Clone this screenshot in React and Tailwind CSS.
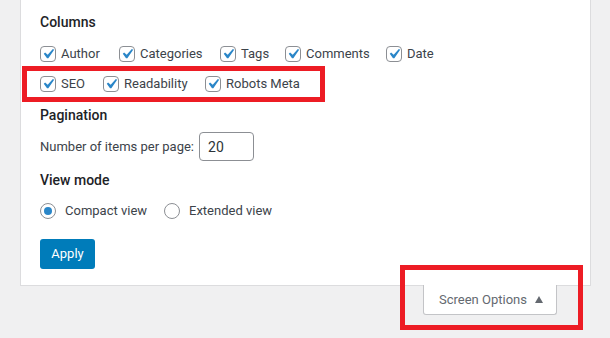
import React from 'react'

const font = "font-['Segoe_UI',Roboto,'Liberation_Sans',sans-serif]"

const CheckBox = ({ label, width }) => (
  <label className={`flex items-center gap-[5px] shrink-0 ${width}`}>
    <span className="flex items-center justify-center w-4 h-4 rounded-[4px] border border-[#8c8f94] bg-white">
      <svg viewBox="0 0 20 20" className="w-[20px] h-[20px] shrink-0 -m-[3px]">
        <path d="M14.83 4.89l1.34.94-5.81 8.38H9.02L5.78 9.67l1.34-1.25 2.57 2.4z" fill="#2a86c8" />
      </svg>
    </span>
    <span className="text-[13px] text-[#3c434a]">{label}</span>
  </label>
)

const Radio = ({ label, checked, width }) => (
  <label className={`flex items-center gap-[9px] shrink-0 ${width}`}>
    <span className="flex items-center justify-center w-4 h-4 rounded-full border border-[#8c8f94] bg-white">
      {checked && <span className="w-2 h-2 rounded-full bg-[#2a86c8]" />}
    </span>
    <span className="text-[13px] text-[#3c434a]">{label}</span>
  </label>
)

export default function App() {
  return (
    <div className={`relative w-[610px] h-[338px] overflow-hidden bg-[#f0f0f1] ${font}`}>
      {/* Screen options panel */}
      <div className="ml-[20px] w-[571px] bg-white border-x border-b border-[#dcdcde] pl-[19px] pt-[12px] pb-[16px]">
        <h5 className="text-[14px] leading-[20px] font-medium text-[#1d2327]">Columns</h5>

        <div className="flex items-center h-5 mt-[12px]">
          <CheckBox label="Author" width="w-[79px]" />
          <CheckBox label="Categories" width="w-[101px]" />
          <CheckBox label="Tags" width="w-[65px]" />
          <CheckBox label="Comments" width="w-[101px]" />
          <CheckBox label="Date" width="w-[80px]" />
        </div>

        {/* highlighted row */}
        <div className="-ml-[18px] mt-[2px] w-[303px] border-[5px] border-[#ed1c24] pl-[13px] py-[3px]">
          <div className="flex items-center h-5">
            <CheckBox label="SEO" width="w-[63px]" />
            <CheckBox label="Readability" width="w-[102px]" />
            <CheckBox label="Robots Meta" width="w-[110px]" />
          </div>
        </div>

        <h5 className="mt-[3px] text-[14px] leading-[20px] font-medium text-[#1d2327]">Pagination</h5>

        <div className="flex items-center gap-[5px] mt-[7px]">
          <span className="text-[13px] text-[#3c434a]">Number of items per page:</span>
          <input
            type="text"
            defaultValue="20"
            className={`w-[55px] h-[29px] rounded-[4px] border border-[#8c8f94] px-[8px] text-[14px] text-[#2c3338] outline-none ${font}`}
          />
        </div>

        <h5 className="mt-[9px] text-[14px] leading-[20px] font-medium text-[#1d2327]">View mode</h5>

        <div className="flex items-center h-5 mt-[11px]">
          <Radio label="Compact view" checked width="w-[124px]" />
          <Radio label="Extended view" width="w-[130px]" />
        </div>

        <button className="mt-[18px] w-[55px] h-[30px] rounded-[3px] bg-[#007cba] text-white text-[13px]">
          Apply
        </button>
      </div>

      {/* Screen Options tab */}
      <div className="ml-[423px] -mt-px w-[134px] h-[30px] bg-white border-x border-b border-[#c3c4c7] rounded-b-[3px] flex items-center pl-[15px] gap-[8px]">
        <span className="text-[13px] text-[#646970]">Screen Options</span>
        <svg viewBox="0 0 8 7" className="w-[8px] h-[7px]">
          <polygon points="4,0 8,7 0,7" fill="#646970" />
        </svg>
      </div>

      {/* annotation */}
      <div className="absolute left-[400px] top-[265px] w-[183px] h-[65px] border-[5px] border-[#ed1c24]" />
    </div>
  )
}
